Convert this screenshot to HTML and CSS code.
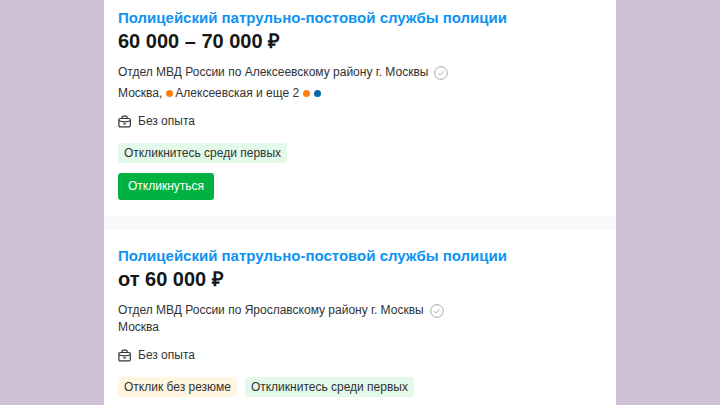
FILE: index.html
```html
<!DOCTYPE html>
<html lang="ru">
<head>
<meta charset="utf-8">
<meta name="viewport" content="width=device-width, initial-scale=1">
<title>Вакансии</title>
<link rel="stylesheet" href="styles.css">
</head>
<body>
<svg width="0" height="0" class="sprite" aria-hidden="true">
  <symbol id="case" viewBox="0 0 14 14">
    <rect x=".9" y="3.5" width="11.4" height="8.4" rx="1.2"/>
    <path d="M4.1 3.5V2.3Q4.1 1.2 5.1 1.2H8.1Q9.1 1.2 9.1 2.3V3.5M.9 5.8Q3.4 6.8 6.6 6.8T12.3 5.8M5.3 8.8H7.9"/>
  </symbol>
  <symbol id="check" viewBox="0 0 14 14">
    <circle cx="7" cy="7" r="6.3"/>
    <path d="M4.4 7.2L6.2 9L9.8 5.4"/>
  </symbol>
</svg>
<main class="list">
  <article class="card">
    <h2 class="title"><a href="#">Полицейский патрульно-постовой службы полиции</a></h2>
    <p class="salary">60 000 – 70 000 ₽</p>
    <p class="line">Отдел МВД России по Алексеевскому району г. Москвы <svg class="check"><use href="#check"/></svg></p>
    <p class="line metro">Москва, <span class="station"><i class="dot orange"></i>Алексеевская и еще 2</span> <i class="dot orange"></i><i class="dot blue"></i></p>
    <p class="line experience"><svg class="case"><use href="#case"/></svg>Без опыта</p>
    <div class="tags"><span class="tag green">Откликнитесь среди первых</span></div>
    <button class="apply" type="button">Откликнуться</button>
  </article>
  <article class="card">
    <h2 class="title"><a href="#">Полицейский патрульно-постовой службы полиции</a></h2>
    <p class="salary">от 60 000 ₽</p>
    <p class="line">Отдел МВД России по Ярославскому району г. Москвы <svg class="check"><use href="#check"/></svg></p>
    <p class="line">Москва</p>
    <p class="line experience"><svg class="case"><use href="#case"/></svg>Без опыта</p>
    <div class="tags"><span class="tag yellow">Отклик без резюме</span><span class="tag green">Откликнитесь среди первых</span></div>
  </article>
</main>
</body>
</html>
```
FILE: styles.css
```css
* { box-sizing: border-box; }
body {
  margin: 0;
  background: #cfc2d6;
  color: #303233;
  font: 12px/17px "Liberation Sans", Arial, sans-serif;
}
h2, p { margin: 0; }
.sprite { position: absolute; }
.list {
  display: flex;
  flex-direction: column;
  gap: 12px;
  min-height: 100vh;
  margin: 0 104px;
  background: #fafafa;
}
.card {
  padding: 8px 14px 17px;
  border-bottom: 1px solid #f4f5f5;
  background: #fff;
}
.card + .card { padding: 16px 14px 8px; }
.title { font-size: 15px; line-height: 20px; }
.title a { color: #0d93f2; text-decoration: none; }
.salary {
  margin-bottom: 10px;
  color: #151719;
  font-size: 20px;
  font-weight: bold;
  line-height: 26px;
}
.line { display: flex; align-items: center; }
.check, .case {
  width: 14px;
  height: 14px;
  fill: none;
}
.check { margin-left: 6px; stroke: #a5a7a8; stroke-width: 1; }
.case { margin-right: 6px; stroke: #303233; stroke-width: 1.2; }
.metro { gap: 4px; margin-top: 4px; }
.station { display: flex; align-items: center; gap: 2px; }
.dot { width: 7px; height: 7px; border-radius: 50%; }
.orange { background: #ff7f11; }
.blue { background: #0a68ab; }
.experience { margin-top: 11px; }
.tags { display: flex; gap: 8px; margin-top: 13px; }
.tag { padding: 1px 6px; border-radius: 3px; line-height: 18px; }
.green { background: #e3f9ea; }
.yellow { background: #fff5e0; }
.apply {
  display: block;
  margin-top: 10px;
  padding: 0 10px;
  border: 0;
  border-radius: 3px;
  background: #00b341;
  color: #fff;
  font: 12px/27px "Liberation Sans", Arial, sans-serif;
}
```
